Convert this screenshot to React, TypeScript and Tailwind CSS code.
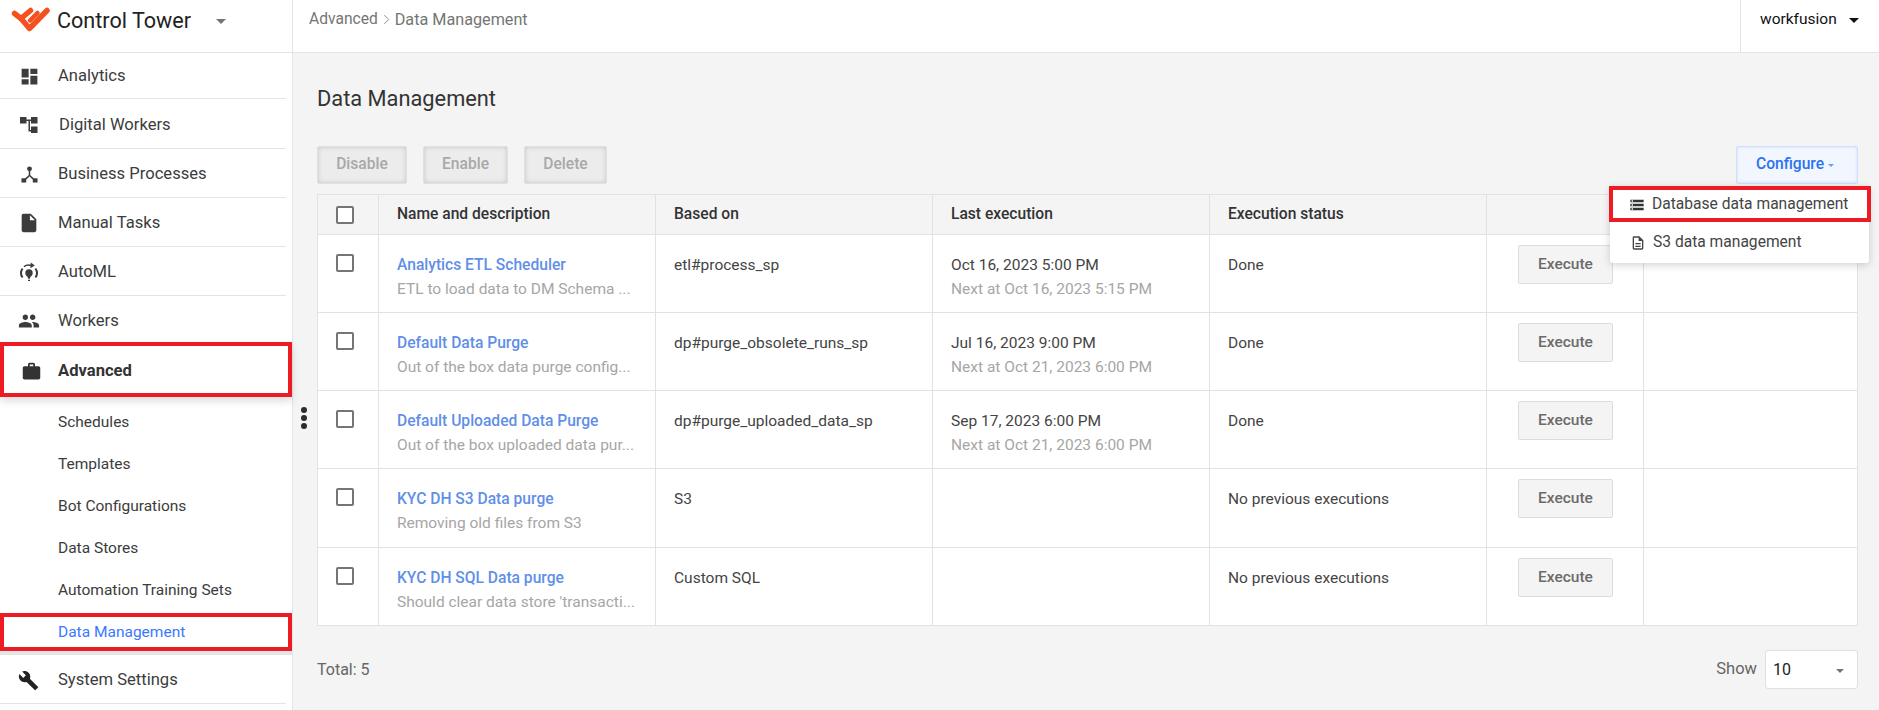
import React from "react";

const P: Record<string, string> = {
  dash: "M3 13h8V3H3v10zm0 8h8v-6H3v6zm10 0h8V11h-8v10zm0-18v6h8V3h-8z",
  people: "M16 11c1.66 0 2.99-1.34 2.99-3S17.66 5 16 5c-1.66 0-3 1.34-3 3s1.34 3 3 3zm-8 0c1.66 0 2.99-1.34 2.99-3S9.66 5 8 5C6.34 5 5 6.34 5 8s1.34 3 3 3zm0 2c-2.33 0-7 1.17-7 3.5V19h14v-2.5c0-2.33-4.67-3.5-7-3.5zm8 0c-.29 0-.62.02-.97.05 1.16.84 1.97 1.97 1.97 3.45V19h6v-2.5c0-2.33-4.67-3.5-7-3.5z",
  work: "M20 6h-4V4c0-1.11-.89-2-2-2h-4c-1.11 0-2 .89-2 2v2H4c-1.11 0-1.99.89-1.99 2L2 19c0 1.11.89 2 2 2h16c1.11 0 2-.89 2-2V8c0-1.11-.89-2-2-2zm-6 0h-4V4h4v2z",
  file: "M6 2c-1.1 0-1.99.9-1.99 2L4 20c0 1.1.89 2 1.99 2H18c1.1 0 2-.9 2-2V8l-6-6H6zm7 7V3.5L18.5 9H13z",
  build: "M22.7 19l-9.1-9.1c.9-2.3.4-5-1.5-6.9-2-2-5-2.4-7.4-1.3L9 6 6 9 1.6 4.7C.4 7.1.9 10.1 2.9 12.1c1.9 1.9 4.6 2.4 6.9 1.5l9.1 9.1c.4.4 1 .4 1.4 0l2.3-2.3c.5-.4.5-1.1.1-1.4z",
  storage: "M2 20h20v-4H2v4zm2-3h2v2H4v-2zM2 4v4h20V4H2zm4 3H4V5h2v2zm-4 7h20v-4H2v4zm2-3h2v2H4v-2z",
  desc: "M14 2H6c-1.1 0-1.99.9-1.99 2L4 20c0 1.1.89 2 1.99 2H18c1.1 0 2-.9 2-2V8l-6-6zm4 18H6V4h7v5h5v11zM8 16h8v2H8zm0-4h8v2H8z",
};

function Mi({ name, className }: { name: string; className?: string }) {
  return (
    <svg viewBox="0 0 24 24" className={className} fill="currentColor">
      <path d={P[name]} />
    </svg>
  );
}

function Flow() {
  return (
    <svg viewBox="0 0 20 18" className="w-[20px] h-[18px]" fill="currentColor">
      <rect x="1" y="1" width="6.5" height="6.5" />
      <rect x="12" y="1" width="6.5" height="6.5" />
      <rect x="12" y="10.5" width="6.5" height="6.5" />
      <path d="M7 3.5h6v1.5H7zM9.5 3.5H11V14h2v1.5H9.5z" />
    </svg>
  );
}

function Proc() {
  return (
    <svg viewBox="0 0 18 18" className="w-[17px] h-[17px]" fill="currentColor">
      <circle cx="9" cy="3" r="2.6" />
      <rect x="8.2" y="4" width="1.6" height="6" />
      <path d="M8.4 9.4l1.2 1.2-4.6 4.2-1.1-1.2zM9.6 9.4l-1.2 1.2 4.6 4.2 1.1-1.2z" />
      <rect x="0.5" y="13" width="5" height="4.5" />
      <rect x="12.5" y="13" width="5" height="4.5" />
    </svg>
  );
}

function AutoMl() {
  return (
    <svg viewBox="0 0 20 20" className="w-[20px] h-[20px]" fill="none" stroke="currentColor">
      <path d="M5 4.6A7.8 7.8 0 0 1 12.5 3.6" strokeWidth="1.7" />
      <path d="M11.8 0.4l4 3.2-4.4 2.6z" fill="currentColor" stroke="none" />
      <path d="M3.6 6.5A7.6 7.6 0 0 0 3.6 15.5" strokeWidth="2" />
      <path d="M16.4 6.5A7.6 7.6 0 0 1 16.4 15.5" strokeWidth="2" />
      <circle cx="10" cy="11" r="3.7" fill="currentColor" stroke="none" />
      <path d="M8 13.5h4l-1.2 3.2H9.2z" fill="currentColor" stroke="none" />
      <path d="M9 18.4h2" strokeWidth="1.2" />
    </svg>
  );
}

function Logo() {
  return (
    <svg viewBox="0 0 40 26" className="w-[40px] h-[26px] -mt-[3px]" fill="none" stroke="#f4511e" strokeLinecap="round" strokeLinejoin="round">
      <path d="M3.5 6.5L10 11.5L19.5 3.5" strokeWidth="5.5" />
      <path d="M10 11.5L18.5 21.5L36 3.5" strokeWidth="5.5" />
      <path d="M19 13.5L26.5 6" strokeWidth="4.5" />
    </svg>
  );
}

function Caret({ className }: { className: string }) {
  return <span className={"inline-block w-0 h-0 border-x-transparent border-b-0 border-solid " + className} />;
}

const mainNav = [
  { label: "Analytics", icon: <Mi name="dash" className="w-[21px] h-[21px]" />, h: "h-[46px] pt-[1px]" },
  { label: "Digital Workers", icon: <Flow />, h: "h-[50px] pt-[3px]", shift: "ml-px" },
  { label: "Business Processes", icon: <Proc />, h: "h-[49px] pt-[2px]" },
  { label: "Manual Tasks", icon: <Mi name="file" className="w-[22px] h-[22px]" />, h: "h-[49px] pt-[2px]" },
  { label: "AutoML", icon: <AutoMl />, h: "h-[49px] pt-[2px]" },
  { label: "Workers", icon: <Mi name="people" className="w-[22px] h-[22px]" />, h: "h-[46px] pt-[4px]", noLine: true },
];

const subNav = ["Schedules", "Templates", "Bot Configurations", "Data Stores", "Automation Training Sets"];

const rows = [
  { name: "Analytics ETL Scheduler", desc: "ETL to load data to DM Schema ...", based: "etl#process_sp", last: "Oct 16, 2023 5:00 PM", next: "Next at Oct 16, 2023 5:15 PM", status: "Done", h: "h-[78px]" },
  { name: "Default Data Purge", desc: "Out of the box data purge config...", based: "dp#purge_obsolete_runs_sp", last: "Jul 16, 2023 9:00 PM", next: "Next at Oct 21, 2023 6:00 PM", status: "Done", h: "h-[78px]" },
  { name: "Default Uploaded Data Purge", desc: "Out of the box uploaded data pur...", based: "dp#purge_uploaded_data_sp", last: "Sep 17, 2023 6:00 PM", next: "Next at Oct 21, 2023 6:00 PM", status: "Done", h: "h-[78px]" },
  { name: "KYC DH S3 Data purge", desc: "Removing old files from S3", based: "S3", last: "", next: "", status: "No previous executions", h: "h-[79px]" },
  { name: "KYC DH SQL Data purge", desc: "Should clear data store 'transacti...", based: "Custom SQL", last: "", next: "", status: "No previous executions", h: "h-[78px]" },
];

const cell = "border-r border-b border-[#e2e2e2] px-[18px] align-top";
const headCell = "border-r border-b border-[#e2e2e2] px-[18px] text-left font-medium text-[15.6px] text-[#333] bg-[#f4f4f4]";

function Box() {
  return <span className="block w-[18px] h-[18px] rounded-[2px] border-2 border-[#757575] bg-white" />;
}

function ToolBtn({ label, w }: { label: string; w: string }) {
  return (
    <button className={"h-[38px] rounded-[2px] bg-[#ececec] border border-[#e0e0e0] shadow-[inset_0_0_5px_rgba(0,0,0,0.16)] text-[15.6px] font-medium text-[#a8a8a8] " + w}>
      {label}
    </button>
  );
}

export default function App() {
  return (
    <div className="w-[1879px] h-[710px] overflow-hidden flex bg-[#f4f4f4] font-['Roboto',sans-serif] relative">
      <aside className="w-[293px] shrink-0 bg-white border-r border-[#e4e4e4] flex flex-col text-[16.6px] text-[#3c3c3c]">
        <div className="h-[53px] shrink-0 border-b border-[#e4e4e4] flex items-center pl-[11px] pb-[10px]">
          <Logo />
          <span className="ml-[6px] text-[21.6px] text-[#222]">Control Tower</span>
          <Caret className="ml-[25px] border-x-[5.5px] border-t-[5.5px] border-t-[#757575]" />
        </div>
        <nav className="mr-[6px] flex flex-col">
          {mainNav.map((n) => (
            <div key={n.label} className={"flex items-center " + n.h + (n.noLine ? "" : " border-b border-[#e4e4e4]")}>
              <span className="w-[58px] pl-[18px] flex justify-start">
                <span className="w-[22px] flex justify-center">{n.icon}</span>
              </span>
              <span className={n.shift}>{n.label}</span>
            </div>
          ))}
        </nav>
        <div className="h-[55px] shrink-0 flex items-center pt-[3px] font-bold text-[#333] border-4 border-[#ed1c24] shadow-[0_4px_8px_rgba(0,0,0,0.14)]">
          <span className="w-[54px] pl-[16.5px] flex">
            <Mi name="work" className="w-[21px] h-[21px] text-[#333]" />
          </span>
          Advanced
        </div>
        <div className="pt-[5px] flex flex-col text-[15.5px]">
          {subNav.map((s) => (
            <div key={s} className="h-[42px] flex items-center pl-[58px]">{s}</div>
          ))}
        </div>
        <div className="h-[38px] shrink-0 mt-[1px] pt-[1px] flex items-center pl-[54px] text-[15.5px] text-[#3b78ff] border-4 border-[#ed1c24]">
          Data Management
        </div>
        <div className="h-[4px] bg-[#e4e4e4] shrink-0" />
        <div className="mr-[6px] h-[49px] shrink-0 flex items-center pt-[3px] border-b border-[#e4e4e4]">
          <span className="w-[58px] pl-[18px] flex">
            <Mi name="build" className="w-[21px] h-[21px] text-[#222]" />
          </span>
          System Settings
        </div>
      </aside>

      <main className="flex-1 min-w-0 flex flex-col relative">
        <header className="h-[53px] shrink-0 bg-white border-b border-[#e4e4e4] flex items-center">
          <div className="flex-1 pl-[16px] pb-[12px] flex items-center text-[15.6px] text-[#757575] gap-[5px]">
            <span>Advanced</span>
            <svg viewBox="0 0 8 12" className="w-[7px] h-[11px]" fill="none" stroke="#888" strokeWidth="1.1"><path d="M1.5 1l5 5-5 5" /></svg>
            <span className="text-[16.2px]">Data Management</span>
          </div>
          <div className="w-[139px] h-full border-l border-[#e4e4e4] flex items-center pl-[19px] pb-[12px] text-[15.5px] text-[#111]">
            workfusion
            <Caret className="ml-[12px] border-x-[5px] border-t-[5px] border-t-[#111]" />
          </div>
        </header>

        <span className="absolute left-[8px] top-[407px] flex flex-col gap-[2px]">
          <span className="w-[6px] h-[6px] rounded-full bg-[#2b2b2b]" />
          <span className="w-[6px] h-[6px] rounded-full bg-[#2b2b2b]" />
          <span className="w-[6px] h-[6px] rounded-full bg-[#2b2b2b]" />
        </span>

        <section className="pl-[24px] pr-[21px] flex flex-col">
          <h1 className="mt-[32px] h-[28px] text-[21.8px] leading-[28px] font-normal text-[#333]">Data Management</h1>
          <div className="mt-[33px] flex gap-[16px] relative">
            <ToolBtn label="Disable" w="w-[90px]" />
            <ToolBtn label="Enable" w="w-[85px]" />
            <ToolBtn label="Delete" w="w-[83px]" />
            <button className="ml-auto h-[38px] w-[122px] pr-[4px] rounded-[2px] bg-[#f2f6ff] border border-[#cfe0ff] shadow-[inset_0_0_3px_rgba(59,120,255,0.2)] text-[15.6px] font-medium text-[#2a73f0] flex items-center justify-center gap-[4px]">
              Configure
              <Caret className="border-x-[3.5px] border-t-[3.5px] border-t-[#6a9cf5]" />
            </button>
            <div className="absolute right-[-11px] top-[40px] z-10 w-[259px] h-[77px] bg-white rounded-[3px] shadow-[0_2px_8px_rgba(0,0,0,0.18)] text-[15.6px] text-[#444]">
              <div className="h-[36px] -ml-px -mr-[2px] pt-[2px] border-4 border-[#ed1c24] flex items-center pl-[16px] bg-white">
                <Mi name="storage" className="w-[16px] h-[16px] mr-[7px] text-[#333]" />
                Database data management
              </div>
              <div className="h-[39px] pt-[2px] flex items-center pl-[20px]">
                <Mi name="desc" className="w-[16px] h-[16px] mr-[7px] text-[#444]" />
                S3 data management
              </div>
            </div>
          </div>

          <table className="mt-[10px] w-[1540px] table-fixed border-collapse border-t border-l border-[#e2e2e2] bg-white text-[15.5px] text-[#444]">
            <colgroup>
              <col className="w-[61px]" />
              <col className="w-[277px]" />
              <col className="w-[277px]" />
              <col className="w-[277px]" />
              <col className="w-[277px]" />
              <col className="w-[157px]" />
              <col className="w-[214px]" />
            </colgroup>
            <thead>
              <tr className="h-[40px]">
                <th className={headCell}><Box /></th>
                <th className={headCell}>Name and description</th>
                <th className={headCell}>Based on</th>
                <th className={headCell}>Last execution</th>
                <th className={headCell}>Execution status</th>
                <th className={headCell} />
                <th className={headCell} />
              </tr>
            </thead>
            <tbody>
              {rows.map((r) => (
                <tr key={r.name} className={r.h}>
                  <td className={cell + " pt-[19px]"}><Box /></td>
                  <td className={cell + " pt-[20px]"}>
                    <div className="text-[#5f8fe8] font-medium text-[15.6px] leading-[20px] whitespace-nowrap">{r.name}</div>
                    <div className="mt-[4px] text-[#a6a6a6] leading-[20px] whitespace-nowrap overflow-hidden">{r.desc}</div>
                  </td>
                  <td className={cell + " pt-[20px] leading-[20px]"}>{r.based}</td>
                  <td className={cell + " pt-[20px] leading-[20px]"}>
                    <div>{r.last}</div>
                    <div className="mt-[4px] text-[#a6a6a6]">{r.next}</div>
                  </td>
                  <td className={cell + " pt-[20px] leading-[20px]"}>{r.status}</td>
                  <td className={cell + " pt-[10px] !px-[31px]"}>
                    <button className="w-[95px] h-[39px] rounded-[2px] bg-[#f4f4f4] border border-[#dcdcdc] text-[15.5px] font-medium text-[#6b6b6b]">Execute</button>
                  </td>
                  <td className={cell} />
                </tr>
              ))}
            </tbody>
          </table>

          <div className="mt-[24px] flex items-center justify-between text-[16px] text-[#666]">
            <span>Total: 5</span>
            <div className="flex items-center gap-[8px]">
              <span className="text-[16.5px]">Show</span>
              <div className="w-[93px] h-[39px] bg-white border border-[#e0e0e0] rounded-[3px] flex items-center justify-between pl-[7px] pr-[13px] text-[16px] text-[#222]">
                10
                <Caret className="mt-[3px] border-x-[4.5px] border-t-[4.5px] border-t-[#757575]" />
              </div>
            </div>
          </div>
        </section>
      </main>
    </div>
  );
}
